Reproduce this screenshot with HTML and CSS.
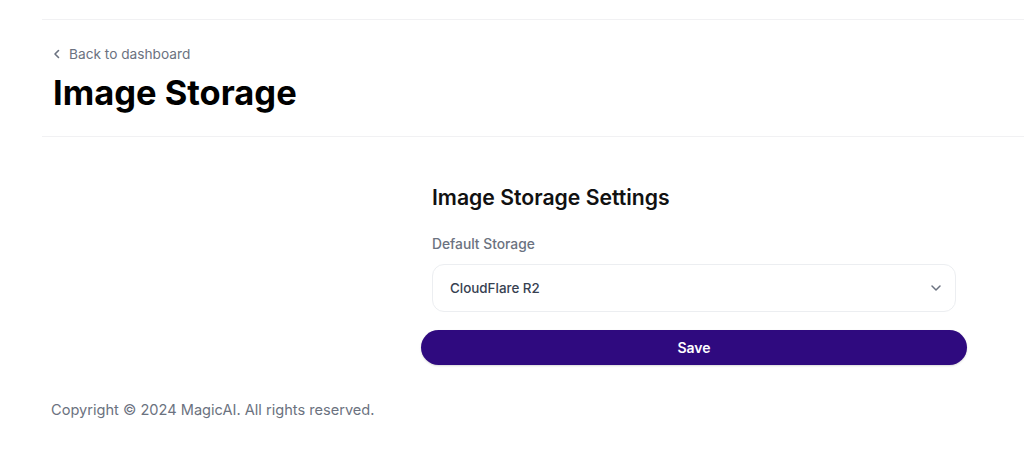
FILE: index.html
```html
<!DOCTYPE html>
<html lang="en">
<head>
    <meta charset="UTF-8">
    <title>Image Storage</title>
    <link rel="stylesheet" href="styles.css">
</head>
<body>
<div class="page">
    <div class="header">
        <a class="back" href="#">
            <svg width="8" height="10" viewBox="0 0 8 10"><path d="M5.5 1.5 L2 5 L5.5 8.5" fill="none" stroke="#6b7280" stroke-width="1.6" stroke-linecap="round" stroke-linejoin="round"/></svg>
            Back to dashboard
        </a>
        <h1>Image Storage</h1>
    </div>

    <div class="content">
        <form class="settings" onsubmit="return false;">
            <h2>Image Storage Settings</h2>
            <label class="label">Default Storage</label>
            <div class="select">
                <span>CloudFlare R2</span>
                <svg width="12" height="8" viewBox="0 0 12 8"><path d="M2 2 L6 6 L10 2" fill="none" stroke="#6b7280" stroke-width="1.5" stroke-linecap="round" stroke-linejoin="round"/></svg>
            </div>
            <button class="save" type="submit">Save</button>
        </form>
    </div>

    <p class="footer">Copyright © 2024 MagicAI. All rights reserved.</p>
</div>
</body>
</html>
```

FILE: styles.css
```css
body {
    margin: 0;
    background: #fff;
    font-family: Inter, "Liberation Sans", sans-serif;
    color: #111;
    overflow: hidden;
}

.page {
    padding-top: 19px;
}

.header {
    margin-left: 42px;
    border-top: 1px solid #f1f1f3;
    border-bottom: 1px solid #f1f1f3;
    padding: 24px 0 23px 11px;
}

.back {
    display: flex;
    align-items: center;
    gap: 8px;
    font-size: 13.7px;
    line-height: 20px;
    color: #6b7280;
    text-decoration: none;
}

.header h1 {
    margin: 9px 0 0;
    font-size: 34.5px;
    line-height: 40px;
    font-weight: 700;
    color: #000;
}

.content {
    padding-left: 432px;
}

.settings {
    width: 524px;
    margin-top: 46px;
    display: flex;
    flex-direction: column;
}

.settings h2 {
    margin: 0;
    font-size: 21.2px;
    line-height: 28px;
    font-weight: 600;
    color: #111;
}

.label {
    margin-top: 23px;
    font-size: 13.8px;
    line-height: 20px;
    font-weight: 500;
    color: #6b7280;
}

.select {
    margin-top: 10px;
    height: 48px;
    box-sizing: border-box;
    border: 1px solid #eceef1;
    border-radius: 12px;
    display: flex;
    align-items: center;
    justify-content: space-between;
    padding: 0 13px 0 17px;
    font-size: 13.4px;
    font-weight: 500;
    color: #374151;
}

.save {
    margin: 18px -11px 0;
    height: 35px;
    border: none;
    border-radius: 18px;
    background: #2f0a7f;
    color: #fff;
    font-family: inherit;
    font-size: 14px;
    font-weight: 600;
    box-shadow: 0 1px 2px rgba(0, 0, 0, 0.15);
}

.footer {
    margin: 35px 0 0 51px;
    font-size: 14.6px;
    line-height: 20px;
    color: #6b7280;
}
```
